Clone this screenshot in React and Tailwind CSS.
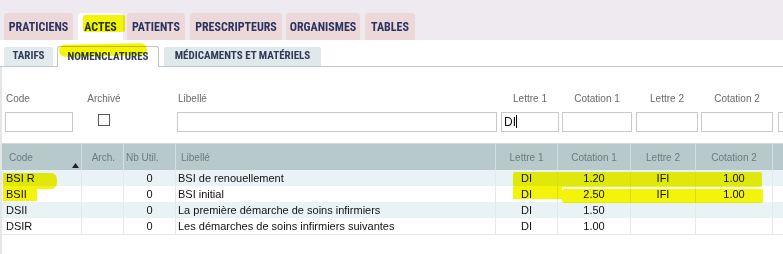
import React from 'react';

const topTabs = [
  { label: 'PRATICIENS', w: 'w-[69px]', ml: 'ml-[4px]' },
  { label: 'ACTES', w: 'w-[45px]', ml: 'ml-[5px]', active: true },
  { label: 'PATIENTS', w: 'w-[58px]', ml: 'ml-[4px]' },
  { label: 'PRESCRIPTEURS', w: 'w-[92px]', ml: 'ml-[5px]' },
  { label: 'ORGANISMES', w: 'w-[74px]', ml: 'ml-[4px]' },
  { label: 'TABLES', w: 'w-[50px]', ml: 'ml-[5px]' },
];

const rows = [
  ['BSI R', '', '0', 'BSI de renouellement', 'DI', '1.20', 'IFI', '1.00'],
  ['BSII', '', '0', 'BSI initial', 'DI', '2.50', 'IFI', '1.00'],
  ['DSII', '', '0', 'La première démarche de soins infirmiers', 'DI', '1.50', '', ''],
  ['DSIR', '', '0', 'Les démarches de soins infirmiers suivantes', 'DI', '1.00', '', ''],
];

const cols = 'grid grid-cols-[80px_42px_52px_320px_62px_73px_65px_77px_1fr]';

const Hl = ({ className }) => (
  <span className={`absolute bg-[#f4f40a] mix-blend-multiply pointer-events-none ${className}`} />
);

export default function App() {
  return (
    <div className="relative w-[783px] h-[254px] overflow-hidden bg-white font-['Liberation_Sans',Arial,sans-serif] text-[#111]">
      {/* top tabs */}
      <div className="h-[40px] bg-[#efeaef] flex items-end">
        {topTabs.map((t) => (
          <div
            key={t.label}
            className={`${t.w} ${t.ml} shrink-0 h-[27px] rounded-t-[3px] flex items-center justify-center font-['Liberation_Sans_Narrow','Roboto_Condensed','DejaVu_Sans_Condensed',sans-serif] font-bold text-[12px] text-[#2b3461] ${t.active ? 'bg-white' : 'bg-[#ecd8d9]'}`}
          >
            {t.label}
          </div>
        ))}
      </div>

      {/* sub tabs */}
      <div className="flex items-end h-[27px] border-b border-[#c2c6c8] font-['Liberation_Sans_Narrow','Roboto_Condensed','DejaVu_Sans_Condensed',sans-serif] font-bold text-[11px] text-[#2f3b55]">
        <div className="ml-[4px] w-[49px] shrink-0 h-[19px] bg-[#e2eaed] rounded-t-[2px] flex items-center justify-center">TARIFS</div>
        <div className="ml-[4px] w-[102px] shrink-0 h-[21px] -mb-px bg-white border border-b-0 border-[#c2c6c8] rounded-t-[3px] flex items-center justify-center">NOMENCLATURES</div>
        <div className="ml-[5px] w-[157px] shrink-0 h-[19px] bg-[#dfe8eb] rounded-t-[2px] flex items-center justify-center">MÉDICAMENTS ET MATÉRIELS</div>
      </div>

      <div className="border-l-2 border-[#e4e6e7] h-[187px]">
        {/* filters */}
        <div className="flex pt-[26px] text-[10px] text-[#6a6a6a]">
          <div className="ml-[3px] w-[68px] shrink-0">
            <div className="h-[12px] leading-[12px] pl-[1px]">Code</div>
            <div className="mt-[7px] h-[20px] border border-[#c9c9c9]" />
          </div>
          <div className="ml-[5px] w-[52px] shrink-0 flex flex-col items-center">
            <div className="h-[12px] leading-[12px]">Archivé</div>
            <div className="mt-[9px] w-[12px] h-[12px] border border-[#555]" />
          </div>
          <div className="ml-[47px] w-[320px] shrink-0">
            <div className="h-[12px] leading-[12px] pl-[1px]">Libellé</div>
            <div className="mt-[7px] h-[20px] border border-[#c9c9c9]" />
          </div>
          <div className="ml-[4px] w-[58px] shrink-0 text-center">
            <div className="h-[12px] leading-[12px]">Lettre 1</div>
            <div className="mt-[7px] h-[20px] border border-[#c9c9c9] text-left pl-[2px] text-[12px] leading-[18px] text-[#111]">
              DI<span className="inline-block w-px h-[13px] bg-[#111] align-[-2px]" />
            </div>
          </div>
          <div className="ml-[3px] w-[70px] shrink-0 text-center">
            <div className="h-[12px] leading-[12px]">Cotation 1</div>
            <div className="mt-[7px] h-[20px] border border-[#c9c9c9]" />
          </div>
          <div className="ml-[4px] w-[62px] shrink-0 text-center">
            <div className="h-[12px] leading-[12px]">Lettre 2</div>
            <div className="mt-[7px] h-[20px] border border-[#c9c9c9]" />
          </div>
          <div className="ml-[3px] w-[72px] shrink-0 text-center">
            <div className="h-[12px] leading-[12px]">Cotation 2</div>
            <div className="mt-[7px] h-[20px] border border-[#c9c9c9]" />
          </div>
          <div className="ml-[5px] w-[60px] shrink-0">
            <div className="h-[12px]" />
            <div className="mt-[7px] h-[20px] border border-[#c9c9c9]" />
          </div>
        </div>

        {/* table */}
        <div className="mt-[11px]">
          <div className={`${cols} h-[27px] bg-[#b8c9cc] text-[10px] text-[#6b7a7e] border-t border-[#d0dadc]`}>
            <div className="relative flex items-center pl-[7px] border-r border-[#d3dee0]">
              Code
              <svg className="absolute right-[2px] bottom-[2px]" width="7" height="5" viewBox="0 0 7 5">
                <path d="M0 5 L3.5 0 L7 5 Z" fill="#222" />
              </svg>
            </div>
            <div className="flex items-center justify-end pr-[8px] border-r border-[#d3dee0]">Arch.</div>
            <div className="flex items-center pl-[2px] border-r border-[#d3dee0]">Nb Util.</div>
            <div className="flex items-center pl-[5px] border-r border-[#d3dee0]">Libellé</div>
            <div className="flex items-center justify-center border-r border-[#d3dee0]">Lettre 1</div>
            <div className="flex items-center justify-center border-r border-[#d3dee0]">Cotation 1</div>
            <div className="flex items-center justify-center border-r border-[#d3dee0]">Lettre 2</div>
            <div className="flex items-center justify-center border-r border-[#d3dee0]">Cotation 2</div>
            <div />
          </div>
          {rows.map((r, i) => (
            <div
              key={r[0]}
              className={`${cols} h-[16px] text-[11px] leading-[16px] ${i % 2 === 0 ? 'bg-[#e9f3f5]' : 'bg-white'} ${i === rows.length - 1 ? 'border-b border-[#e2e8ea] h-[17px]' : ''}`}
            >
              <div className="pl-[4px] border-r border-[#e1eaec]">{r[0]}</div>
              <div className="border-r border-[#e1eaec]">{r[1]}</div>
              <div className="text-center border-r border-[#e1eaec]">{r[2]}</div>
              <div className="pl-[2px] border-r border-[#e1eaec] whitespace-nowrap overflow-hidden">{r[3]}</div>
              <div className="text-center border-r border-[#e1eaec]">{r[4]}</div>
              <div className="text-center border-r border-[#e1eaec]">{r[5]}</div>
              <div className="text-center border-r border-[#e1eaec]">{r[6]}</div>
              <div className="text-center border-r border-[#e1eaec]">{r[7]}</div>
              <div />
            </div>
          ))}
        </div>
      </div>

      {/* highlighter marks */}
      <Hl className="left-[83px] top-[15px] w-[42px] h-[17px] rounded-[2px]" />
      <Hl className="left-[59px] top-[44px] w-[88px] h-[12px] rounded-[6px] -rotate-1" />
      <Hl className="left-[3px] top-[173px] w-[54px] h-[16px] rounded-r-[6px]" />
      <Hl className="left-[3px] top-[189px] w-[34px] h-[12px]" />
      <Hl className="left-[513px] top-[172px] w-[249px] h-[15px] rounded-[2px]" />
      <Hl className="left-[513px] top-[187px] w-[49px] h-[12px]" />
      <Hl className="left-[562px] top-[189px] w-[201px] h-[14px] rounded-[2px]" />
    </div>
  );
}
